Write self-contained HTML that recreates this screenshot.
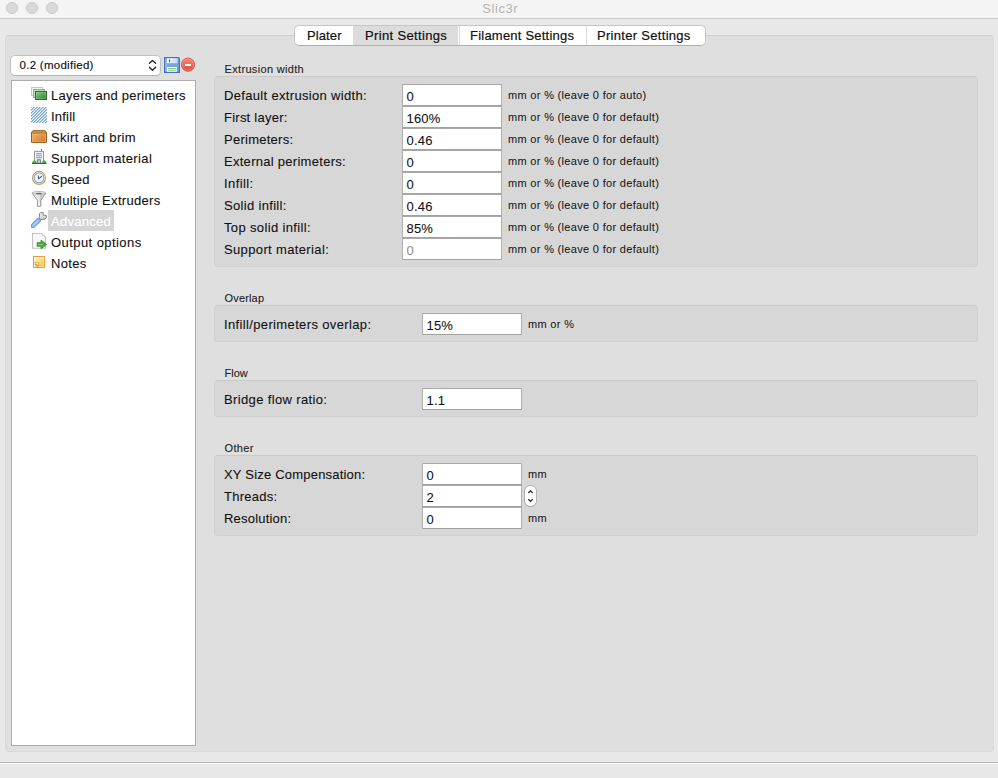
<!DOCTYPE html>
<html><head><meta charset="utf-8">
<style>
*{box-sizing:border-box;margin:0;padding:0}
html,body{width:998px;height:778px;overflow:hidden}
body{position:relative;background:#e8e8e8;font-family:"Liberation Sans",sans-serif;color:#222;font-size:13px}
.a{position:absolute}
.t{position:absolute;white-space:pre;line-height:1;}
#title{left:0;top:0;width:998px;height:19px;background:#f4f4f4;border-bottom:1px solid #c9c9c9}
.light{position:absolute;top:2px;width:12px;height:12px;border-radius:50%;background:#dadada;border:1px solid #cbcbcb}
#tabpanel{left:5px;top:35px;width:989px;height:717px;background:#dfdfdf;border:1px solid #d9d9d9;border-top-color:#cfcfcf;border-bottom-color:#dadada;border-radius:4px;box-shadow:-1px 0 0 #ebebeb,1px 0 0 #ebebeb}
#seg{left:294px;top:25px;width:412px;color:#111;-webkit-text-stroke:0.2px #111;height:21px;background:#fff;border:1px solid #c6c6c6;border-bottom-color:#b0b0b0;border-radius:5px;overflow:hidden}
.sep{position:absolute;top:0;width:1px;height:19px;background:#dadada}
#botline{left:0;top:762px;width:998px;height:2px;background:#b6b6b6;border-bottom:1px solid #fbfbfb}
#combo{left:11px;top:56px;width:149px;height:19px;background:#fff;border-radius:4px;box-shadow:0 0 0 0.8px #b8b8b8,0 0.8px 0.6px #9a9a9a}
#tree{left:11px;top:80px;width:185px;height:666px;background:#fff;border:1px solid #acacac}
.gb{position:absolute;left:214px;width:764px;background:#d7d7d7;border:1px solid #d0d0d0;border-top-color:#c9c9c9;border-radius:4px}
.f{position:absolute;width:100px;height:22px;background:#fff;border:1px solid #b0b0b0;border-top-color:#a9a9a9;border-bottom-color:#a2a2a2}
.lbl{font-size:13px;letter-spacing:0.36px;color:#111;-webkit-text-stroke:0.1px #111}
.gt{font-size:11px;letter-spacing:0.32px;color:#222;-webkit-text-stroke:0.1px #222}
.tr{letter-spacing:0.3px}
.sm{font-size:11px;letter-spacing:0.32px;color:#151515;-webkit-text-stroke:0.05px #151515}
.val{font-size:13px;letter-spacing:0.2px;color:#111;-webkit-text-stroke:0.08px #111}
</style></head><body>
<div id="title" class="a"></div>
<div class="light" style="left:6px"></div>
<div class="light" style="left:26px"></div>
<div class="light" style="left:46px"></div>
<div class="t" style="left:482.3px;top:2px;font-size:13px;color:#b5b5b5;letter-spacing:0.55px">Slic3r</div>

<div id="tabpanel" class="a"></div>
<div id="seg" class="a">
  <div class="a" style="left:58px;top:0;width:105px;height:19px;background:#dcdcdc"></div>
  <div class="sep" style="left:164px"></div>
  <div class="sep" style="left:291px"></div>
  <div class="t" style="left:12px;top:3px;letter-spacing:0.1px">Plater</div>
  <div class="t" style="left:70px;top:3px;letter-spacing:0.35px">Print Settings</div>
  <div class="t" style="left:175px;top:3px;letter-spacing:0.22px">Filament Settings</div>
  <div class="t" style="left:302px;top:3px;letter-spacing:0.3px">Printer Settings</div>
</div>
<div id="botline" class="a"></div>

<!-- left -->
<div id="combo" class="a"></div>
<div class="t" style="left:19.5px;top:60px;font-size:11.5px;letter-spacing:0.28px;color:#111;-webkit-text-stroke:0.15px #111">0.2 (modified)</div>
<svg class="a" style="left:146px;top:57px" width="14" height="16" viewBox="0 0 14 16">
<path d="M3.4 6.3 L6.45 3.4 L9.6 6.3" fill="none" stroke="#262626" stroke-width="1.35" stroke-linecap="round" stroke-linejoin="round"/>
<path d="M3.4 10.3 L6.45 13.3 L9.6 10.3" fill="none" stroke="#262626" stroke-width="1.35" stroke-linecap="round" stroke-linejoin="round"/>
</svg>
<svg class="a" style="left:164px;top:57px" width="16" height="16" viewBox="0 0 16 16">
<defs><linearGradient id="gFl" x1="0" y1="0" x2="1" y2="0"><stop offset="0" stop-color="#f4f8fd"/><stop offset="1" stop-color="#c6d8f2"/></linearGradient></defs>
<path d="M0.6 0.6 H14.6 L15.4 1.4 V15.4 H0.6 Z" fill="#78a4df" stroke="#3b74c6" stroke-width="1.2"/>
<rect x="1.5" y="1.4" width="1" height="13.2" fill="#a9c6ee"/>
<rect x="3" y="1.2" width="10.6" height="5" fill="url(#gFl)"/>
<rect x="5" y="2.4" width="1" height="2.8" fill="#2e5faa"/>
<rect x="3" y="10" width="9.8" height="4.8" fill="#fbfbfb"/>
<rect x="4" y="11" width="7.8" height="0.9" fill="#7cc061"/>
<rect x="4" y="12.8" width="7.8" height="0.9" fill="#7cc061"/>
</svg>
<svg class="a" style="left:180px;top:57px" width="16" height="16" viewBox="0 0 16 16">
<defs><linearGradient id="gR" x1="0" y1="0" x2="0" y2="1"><stop offset="0" stop-color="#f3897a"/><stop offset="1" stop-color="#e14a36"/></linearGradient></defs>
<circle cx="8" cy="7.7" r="6.6" fill="url(#gR)" stroke="#d2503e" stroke-width="0.9"/>
<circle cx="8" cy="7.7" r="5.6" fill="none" stroke="#f6b0a4" stroke-width="0.5" opacity="0.8"/>
<rect x="5" y="7" width="5.9" height="2" fill="#fff"/>
</svg>
<div id="tree" class="a"></div>

<!-- right groups -->
<div class="t gt" style="left:224.6px;top:64px">Extrusion width</div>
<div class="gb" style="top:76px;height:191px"></div>
<div class="t gt" style="left:224.6px;top:292.5px;letter-spacing:0.15px">Overlap</div>
<div class="gb" style="top:305px;height:37px"></div>
<div class="t gt" style="left:224.6px;top:367.5px;letter-spacing:0px">Flow</div>
<div class="gb" style="top:380px;height:37px"></div>
<div class="t gt" style="left:224.6px;top:443px">Other</div>
<div class="gb" style="top:455px;height:81px"></div>

<!--EXT-->
<div class="t lbl" style="left:224px;top:89px;letter-spacing:0.33px">Default extrusion width:</div>
<div class="f" style="left:402px;top:84px"></div>
<div class="t val" style="left:406.5px;top:90px">0</div>
<div class="t sm" style="left:508px;top:90px">mm or % (leave 0 for auto)</div>
<div class="t lbl" style="left:224px;top:111px;letter-spacing:0.24px">First layer:</div>
<div class="f" style="left:402px;top:106px"></div>
<div class="t val" style="left:406.5px;top:112px">160%</div>
<div class="t sm" style="left:508px;top:112px">mm or % (leave 0 for default)</div>
<div class="t lbl" style="left:224px;top:133px;letter-spacing:0.26px">Perimeters:</div>
<div class="f" style="left:402px;top:128px"></div>
<div class="t val" style="left:406.5px;top:134px">0.46</div>
<div class="t sm" style="left:508px;top:134px">mm or % (leave 0 for default)</div>
<div class="t lbl" style="left:224px;top:155px;letter-spacing:0.28px">External perimeters:</div>
<div class="f" style="left:402px;top:150px"></div>
<div class="t val" style="left:406.5px;top:156px">0</div>
<div class="t sm" style="left:508px;top:156px">mm or % (leave 0 for default)</div>
<div class="t lbl" style="left:224px;top:177px;letter-spacing:0.4px">Infill:</div>
<div class="f" style="left:402px;top:172px"></div>
<div class="t val" style="left:406.5px;top:178px">0</div>
<div class="t sm" style="left:508px;top:178px">mm or % (leave 0 for default)</div>
<div class="t lbl" style="left:224px;top:199px;letter-spacing:0.32px">Solid infill:</div>
<div class="f" style="left:402px;top:194px"></div>
<div class="t val" style="left:406.5px;top:200px">0.46</div>
<div class="t sm" style="left:508px;top:200px">mm or % (leave 0 for default)</div>
<div class="t lbl" style="left:224px;top:221px;letter-spacing:0.36px">Top solid infill:</div>
<div class="f" style="left:402px;top:216px"></div>
<div class="t val" style="left:406.5px;top:222px">85%</div>
<div class="t sm" style="left:508px;top:222px">mm or % (leave 0 for default)</div>
<div class="t lbl" style="left:224px;top:243px;letter-spacing:0.36px">Support material:</div>
<div class="f" style="left:402px;top:238px"></div>
<div class="t val" style="left:406.5px;top:244px;color:#9a9a9a">0</div>
<div class="t sm" style="left:508px;top:244px">mm or % (leave 0 for default)</div>
<!--OTHER-->

<div class="t lbl" style="left:224px;top:318px">Infill/perimeters overlap:</div>
<div class="f" style="left:422px;top:313px"></div>
<div class="t val" style="left:426.5px;top:319px">15%</div>
<div class="t sm" style="left:528px;top:319px">mm or %</div>

<div class="t lbl" style="left:224px;top:393px">Bridge flow ratio:</div>
<div class="f" style="left:422px;top:388px"></div>
<div class="t val" style="left:426.5px;top:394px">1.1</div>

<div class="t lbl" style="left:224px;top:468px;letter-spacing:0.2px">XY Size Compensation:</div>
<div class="f" style="left:422px;top:463px"></div>
<div class="t val" style="left:426.5px;top:469px">0</div>
<div class="t sm" style="left:528px;top:469px">mm</div>
<div class="t lbl" style="left:224px;top:490px;letter-spacing:0.25px">Threads:</div>
<div class="f" style="left:422px;top:485px"></div>
<div class="t val" style="left:426.5px;top:491px">2</div>
<div class="a" style="left:525px;top:486px;width:11px;height:20px;background:#fff;border-radius:5px;box-shadow:0 0 0 0.8px #aaaaaa,0 0.6px 1px #999"></div>
<svg class="a" style="left:525px;top:486px" width="11" height="20" viewBox="0 0 11 20">
<path d="M3.3 7 L5.5 4.8 L7.7 7" fill="none" stroke="#2a2a2a" stroke-width="1.3"/>
<path d="M3.3 13.2 L5.5 15.4 L7.7 13.2" fill="none" stroke="#2a2a2a" stroke-width="1.3"/>
</svg>
<div class="t lbl" style="left:224px;top:512px;letter-spacing:0.2px">Resolution:</div>
<div class="f" style="left:422px;top:507px"></div>
<div class="t val" style="left:426.5px;top:513px">0</div>
<div class="t sm" style="left:528px;top:513px">mm</div>

<!--TREE-->
<div class="t lbl tr" style="left:51px;top:89px;letter-spacing:0.26px">Layers and perimeters</div>
<div class="t lbl tr" style="left:51px;top:110px;letter-spacing:0.2px">Infill</div>
<div class="t lbl tr" style="left:51px;top:131px;letter-spacing:0.34px">Skirt and brim</div>
<div class="t lbl tr" style="left:51px;top:152px;letter-spacing:0.36px">Support material</div>
<div class="t lbl tr" style="left:51px;top:173px;letter-spacing:0.22px">Speed</div>
<div class="t lbl tr" style="left:51px;top:194px;letter-spacing:0.3px">Multiple Extruders</div>
<div class="a" style="left:48px;top:210px;width:66px;height:21px;background:#d4d4d4"></div>
<div class="t lbl tr" style="left:51px;top:215px;color:#fff;-webkit-text-stroke:0.2px #fff;letter-spacing:0.27px">Advanced</div>
<div class="t lbl tr" style="left:51px;top:236px;letter-spacing:0.43px">Output options</div>
<div class="t lbl tr" style="left:51px;top:257px;letter-spacing:0.3px">Notes</div>
<!--ICONS-->
<svg class="a" style="left:31px;top:86px" width="16" height="16" viewBox="0 0 16 16">
<defs><linearGradient id="gL" x1="0" y1="0" x2="1" y2="1"><stop offset="0" stop-color="#8ccb86"/><stop offset="1" stop-color="#2f7e2f"/></linearGradient></defs>
<rect x="0.5" y="1.5" width="11" height="8" fill="#eef7ee" stroke="#b0d8b0" stroke-width="1"/>
<rect x="2.5" y="3.5" width="11" height="8" fill="#bfe0bf" stroke="#80bc80" stroke-width="1"/>
<rect x="4.5" y="5.5" width="11" height="8" fill="url(#gL)" stroke="#2a6a2a" stroke-width="1"/>
<rect x="5.5" y="6.5" width="9" height="6" fill="none" stroke="#a8d8a0" stroke-width="0.6" opacity="0.6"/>
</svg>
<svg class="a" style="left:31px;top:107px" width="16" height="16" viewBox="0 0 16 16">
<defs><pattern id="pH" width="3" height="3" patternUnits="userSpaceOnUse"><rect width="3" height="3" fill="#fff"/><rect x="0" y="2" width="1" height="1" fill="#6b9fd6"/><rect x="1" y="1" width="1" height="1" fill="#6b9fd6"/><rect x="2" y="0" width="1" height="1" fill="#6b9fd6"/><rect x="0" y="0" width="1" height="1" fill="#b3cdea"/><rect x="1" y="2" width="1" height="1" fill="#b3cdea"/><rect x="2" y="1" width="1" height="1" fill="#b3cdea"/></pattern></defs>
<rect x="0" y="0" width="16" height="16" rx="1" fill="url(#pH)"/>
</svg>
<svg class="a" style="left:31px;top:128px" width="16" height="16" viewBox="0 0 16 16">
<defs><linearGradient id="gS" x1="0" y1="0" x2="1" y2="1"><stop offset="0" stop-color="#f2bf66"/><stop offset="1" stop-color="#d9702e"/></linearGradient></defs>
<path d="M0.6 4.4 L2.4 2.5 H13.6 L15.4 4.4 V13.8 Q15.4 14.4 14.8 14.4 H1.2 Q0.6 14.4 0.6 13.8 Z" fill="url(#gS)" stroke="#8b5a1a" stroke-width="1.1"/>
<path d="M2.4 2.5 H13.6 L15.4 4.4 H0.6 Z" fill="#c2915a"/>
<rect x="1.3" y="4.6" width="13.4" height="1.3" fill="#a06a28"/>
<rect x="1.6" y="5.9" width="12.8" height="7.9" fill="none" stroke="#f7c79a" stroke-width="0.7" opacity="0.8"/>
</svg>
<svg class="a" style="left:31px;top:149px" width="16" height="16" viewBox="0 0 16 16">
<rect x="10.2" y="1.3" width="0.7" height="1.4" fill="#4a5a5a"/>
<circle cx="10.5" cy="0.8" r="0.75" fill="#e82a2a"/>
<rect x="3.5" y="2.4" width="9" height="11.8" fill="#f2f2f2" stroke="#999" stroke-width="1"/>
<rect x="5" y="4" width="6" height="1.2" rx="0.5" fill="#82aee6"/>
<rect x="5" y="6" width="6" height="1.2" rx="0.5" fill="#82aee6"/>
<rect x="5" y="8" width="6" height="1.2" rx="0.5" fill="#82aee6"/>
<rect x="6.4" y="10.8" width="3" height="3.4" fill="#d4d4d4" stroke="#707070" stroke-width="0.9"/>
<path d="M0.9 14.2 Q1.5 11.8 3 11.4 Q3.4 10.4 3.9 11.4 Q5.6 11.8 6 14.2 Z" fill="#46a846"/>
<path d="M10.8 14.2 Q11.2 11.8 12.8 11.4 Q13.2 10.4 13.7 11.4 Q15.4 11.8 15.8 14.2 Z" fill="#46a846"/>
<rect x="1" y="14" width="14.4" height="1" fill="#555"/>
</svg>
<svg class="a" style="left:31px;top:170px" width="16" height="16" viewBox="0 0 16 16">
<circle cx="8" cy="7.9" r="6.5" fill="#fbf8ee" stroke="#c7a052" stroke-width="1.1"/>
<circle cx="8" cy="7.9" r="4.9" fill="#edf5fd" stroke="#78a6e0" stroke-width="1.1"/>
<path d="M7.2 5.5 L7.7 8.9 L10.8 6.1" fill="none" stroke="#5a5a5a" stroke-width="1.1" stroke-linejoin="round"/>
</svg>
<svg class="a" style="left:31px;top:191px" width="16" height="16" viewBox="0 0 16 16">
<defs><linearGradient id="gF" x1="0" y1="0" x2="1" y2="0"><stop offset="0" stop-color="#f4f4f4"/><stop offset="0.55" stop-color="#e2e2e2"/><stop offset="0.56" stop-color="#c6c6c6"/><stop offset="1" stop-color="#d6d6d6"/></linearGradient></defs>
<path d="M1.1 2.2 L6.4 9.3 V15.5 L9.9 15.1 V9.3 L14.9 2.2 Z" fill="url(#gF)" stroke="#8e8e8e" stroke-width="0.85" stroke-linejoin="round"/>
<ellipse cx="8" cy="1.9" rx="6.9" ry="1.4" fill="#ececec" stroke="#a4a4a4" stroke-width="0.8"/>
<ellipse cx="7.9" cy="2.5" rx="3.3" ry="0.75" fill="#6e6e6e"/>
<rect x="7.5" y="10" width="1.1" height="4.8" fill="#f6f6f6"/>
</svg>
<svg class="a" style="left:31px;top:212px" width="16" height="16" viewBox="0 0 16 16">
<defs><linearGradient id="gW" x1="0" y1="0" x2="1" y2="1"><stop offset="0" stop-color="#f2f2f2"/><stop offset="1" stop-color="#c4c4c4"/></linearGradient></defs>
<path d="M9.1 0.9 Q9.6 0.4 10.6 0.4 L12.2 0.4 L12.1 2.6 Q12.4 4.1 13.4 3.2 L15.3 3.4 Q15.6 4.8 15.2 5.8 L14 7.2 L10.3 7.4 L9 8.2 L8.3 5.4 L8.5 1.8 Z" fill="url(#gW)" stroke="#7c7c7c" stroke-width="0.95" stroke-linejoin="round"/>
<path d="M1.9 13.9 L7.6 8.2" stroke="#6a9be2" stroke-width="4.8" stroke-linecap="round"/>
<path d="M2.1 13.7 L7.4 8.4" stroke="#b0ccf2" stroke-width="2.2" stroke-linecap="round"/>
</svg>
<svg class="a" style="left:31px;top:233px" width="16" height="16" viewBox="0 0 16 16">
<path d="M1.5 0.5 H10.6 L14.5 4.4 V15.2 H1.5 Z" fill="#f8f8f8" stroke="#c2c2c2" stroke-width="1.1"/>
<path d="M6.2 9.7 H10.1 V7.1 L15.5 11.5 L10.1 15.7 V13.2 H6.2 Z" fill="#4eaa40" stroke="#2f8a24" stroke-width="0.9" stroke-linejoin="round"/>
<path d="M7 11.5 H11.8" stroke="#8fcf80" stroke-width="1"/>
</svg>
<svg class="a" style="left:31px;top:254px" width="16" height="16" viewBox="0 0 16 16">
<defs><linearGradient id="gN" x1="0" y1="0" x2="1" y2="1"><stop offset="0" stop-color="#fbeeb0"/><stop offset="1" stop-color="#f0c640"/></linearGradient></defs>
<rect x="2.5" y="2.5" width="11" height="11" fill="#fff6e6" stroke="#ee9a3c" stroke-width="1"/>
<rect x="4.2" y="4.6" width="8.3" height="7.9" fill="url(#gN)"/>
<path d="M3 8.6 H7.6 V13" fill="#fff4e0" stroke="#f0a64c" stroke-width="0.9"/>
<path d="M4 9.6 L6.4 12" stroke="#e0862a" stroke-width="1.1"/>
<path d="M6.8 10.2 V12.4 H4.6 Z" fill="#e0862a"/>
</svg>

</body></html>
